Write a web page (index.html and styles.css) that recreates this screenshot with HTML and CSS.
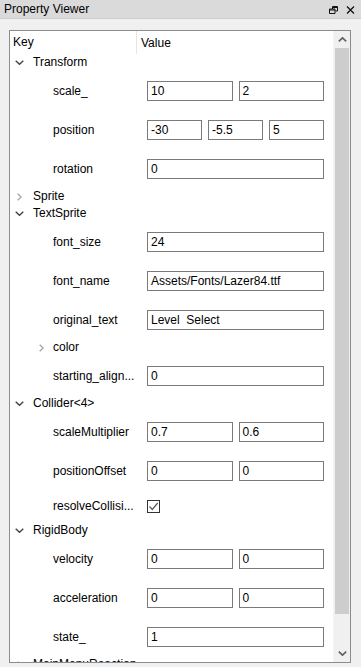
FILE: index.html
```html
<!DOCTYPE html>
<html>
<head>
<meta charset="utf-8">
<link rel="stylesheet" href="styles.css">
</head>
<body>
<div class="titlebar">
  <span class="title">Property Viewer</span>
  <span class="title-icons">
    <svg width="9" height="8" viewBox="0 0 9 8"><path d="M3.5 0.5h5v4.5h-2M0.5 3h5.5v4.5h-5.5z M0.5 4h5.5M3.5 0.5v2.5M3.5 1.5h5" fill="none" stroke="#111" stroke-width="1"/></svg>
    <svg width="9" height="8" viewBox="0 0 9 8"><path d="M1 0.5l7 7M8 0.5l-7 7" stroke="#111" stroke-width="1.3" fill="none"/></svg>
  </span>
</div>
<div class="panel">
  <div class="box">
    <div class="tree">
      <div class="header">
        <div class="hkey">Key</div>
        <div class="hval">Value</div>
      </div>

      <div class="group"><span class="arr down"><svg width="9" height="5" viewBox="0 0 9 5"><path d="M0.7 0.7l3.8 3.6 3.8-3.6" fill="none" stroke="#444" stroke-width="1.4"/></svg></span>Transform</div>
      <div class="prop"><div class="key">scale_</div><div class="val"><div class="inp">10</div><div class="inp">2</div></div></div>
      <div class="prop"><div class="key">position</div><div class="val"><div class="inp">-30</div><div class="inp">-5.5</div><div class="inp">5</div></div></div>
      <div class="prop"><div class="key">rotation</div><div class="val"><div class="inp">0</div></div></div>

      <div class="group"><span class="arr right"><svg width="5" height="8" viewBox="0 0 5 8"><path d="M0.7 0.7l3.4 3.3-3.4 3.3" fill="none" stroke="#a8a8a8" stroke-width="1.4"/></svg></span>Sprite</div>
      <div class="group"><span class="arr down"><svg width="9" height="5" viewBox="0 0 9 5"><path d="M0.7 0.7l3.8 3.6 3.8-3.6" fill="none" stroke="#444" stroke-width="1.4"/></svg></span>TextSprite</div>
      <div class="prop"><div class="key">font_size</div><div class="val"><div class="inp">24</div></div></div>
      <div class="prop"><div class="key">font_name</div><div class="val"><div class="inp">Assets/Fonts/Lazer84.ttf</div></div></div>
      <div class="prop"><div class="key">original_text</div><div class="val"><div class="inp">Level&nbsp; Select</div></div></div>
      <div class="subgroup"><span class="arr right"><svg width="5" height="8" viewBox="0 0 5 8"><path d="M0.7 0.7l3.4 3.3-3.4 3.3" fill="none" stroke="#a8a8a8" stroke-width="1.4"/></svg></span>color</div>
      <div class="prop"><div class="key">starting_align...</div><div class="val"><div class="inp">0</div></div></div>

      <div class="group"><span class="arr down"><svg width="9" height="5" viewBox="0 0 9 5"><path d="M0.7 0.7l3.8 3.6 3.8-3.6" fill="none" stroke="#444" stroke-width="1.4"/></svg></span>Collider&lt;4&gt;</div>
      <div class="prop"><div class="key">scaleMultiplier</div><div class="val"><div class="inp">0.7</div><div class="inp">0.6</div></div></div>
      <div class="prop"><div class="key">positionOffset</div><div class="val"><div class="inp">0</div><div class="inp">0</div></div></div>
      <div class="prop check-row"><div class="key">resolveCollisi...</div><div class="val"><span class="checkbox"><svg width="11" height="11" viewBox="0 0 11 11"><path d="M1.5 5.5l2.8 3 5.4-6.5" fill="none" stroke="#555" stroke-width="1.2"/></svg></span></div></div>

      <div class="group"><span class="arr down"><svg width="9" height="5" viewBox="0 0 9 5"><path d="M0.7 0.7l3.8 3.6 3.8-3.6" fill="none" stroke="#444" stroke-width="1.4"/></svg></span>RigidBody</div>
      <div class="prop"><div class="key">velocity</div><div class="val"><div class="inp">0</div><div class="inp">0</div></div></div>
      <div class="prop"><div class="key">acceleration</div><div class="val"><div class="inp">0</div><div class="inp">0</div></div></div>
      <div class="prop"><div class="key">state_</div><div class="val"><div class="inp">1</div></div></div>

      <div class="group"><span class="arr right"><svg width="5" height="8" viewBox="0 0 5 8"><path d="M0.7 0.7l3.4 3.3-3.4 3.3" fill="none" stroke="#a8a8a8" stroke-width="1.4"/></svg></span>MainMenuReaction</div>
    </div>
    <div class="scrollbar">
      <div class="sbtn"><svg width="9" height="5" viewBox="0 0 9 5"><path d="M0.8 4.3l3.7-3.5 3.7 3.5" fill="none" stroke="#606060" stroke-width="1.6"/></svg></div>
      <div class="thumb"></div>
      <div class="track"></div>
      <div class="sbtn"><svg width="9" height="5" viewBox="0 0 9 5"><path d="M0.8 0.7l3.7 3.5 3.7-3.5" fill="none" stroke="#606060" stroke-width="1.6"/></svg></div>
    </div>
  </div>
</div>
</body>
</html>
```

FILE: styles.css
```css
* { box-sizing: border-box; }
html, body {
  margin: 0;
  padding: 0;
}
body {
  width: 361px;
  height: 667px;
  overflow: hidden;
  background: #f0f0f0;
  font-family: "Liberation Sans", Arial, sans-serif;
  font-size: 12px;
  color: #000;
}
.titlebar {
  height: 19px;
  background: #dadada;
  border-bottom: 1px solid #cdcdcd;
  display: flex;
  align-items: center;
  justify-content: space-between;
  padding: 0 6px 0 4px;
}
.title {
  line-height: 18px;
}
.title-icons {
  display: flex;
  gap: 8px;
  align-items: center;
  padding-top: 1px;
}
.title-icons svg { display: block; }
.panel {
  padding: 11px 10px 0 9px;
}
.box {
  height: 633px;
  border: 1px solid #8c8c8c;
  background: #fff;
  display: flex;
  overflow: hidden;
}
.tree {
  flex: 1;
  overflow: hidden;
}
.header {
  height: 23px;
  display: grid;
  grid-template-columns: 127px 1fr;
  align-items: center;
}
.hkey {
  padding-left: 3px;
  height: 23px;
  line-height: 23px;
  border-right: 1px solid #e5e5e5;
}
.hval {
  padding-left: 4px;
}
.group, .subgroup {
  height: 17px;
  display: flex;
  align-items: center;
  line-height: 17px;
}
.group { padding-left: 5px; }
.group .arr { width: 18px; }
.subgroup { padding-left: 27px; }
.subgroup .arr { width: 16px; }
.arr {
  display: flex;
  align-items: center;
}
.arr.right { padding-left: 2px; }
.arr svg { display: block; }
.prop {
  height: 39px;
  display: grid;
  grid-template-columns: 127px 1fr;
  align-items: center;
}
.prop.check-row { height: 32px; }
.key {
  padding-left: 43px;
  white-space: nowrap;
}
.val {
  padding: 0 9px 0 10px;
  display: flex;
  gap: 6px;
}
.inp {
  flex: 1;
  height: 20px;
  border: 1px solid #7a7a7a;
  line-height: 18px;
  padding-left: 3px;
  white-space: nowrap;
  overflow: hidden;
}
.checkbox {
  width: 13px;
  height: 13px;
  border: 1px solid #333;
  display: flex;
  align-items: center;
  justify-content: center;
  background: #fff;
}
.checkbox svg { display: block; }
.scrollbar {
  width: 17px;
  background: #f0f0f0;
  display: flex;
  flex-direction: column;
  border-left: 1px solid #f5f5f5;
}
.sbtn {
  height: 17px;
  display: flex;
  align-items: center;
  justify-content: center;
}
.thumb {
  height: 566px;
  margin: 0 1px;
  background: #cdcdcd;
}
.track { flex: 1; }
```
